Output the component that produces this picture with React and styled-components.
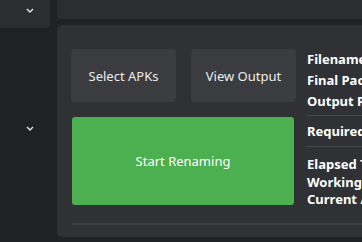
import React from 'react';
import styled, { createGlobalStyle } from 'styled-components';

const GlobalStyle = createGlobalStyle`
  html, body {
    margin: 0;
    padding: 0;
    background-color: #1f2124;
    overflow: hidden;
  }
  * {
    box-sizing: border-box;
  }
`;

const Layout = styled.div`
  display: flex;
  width: 362px;
  height: 242px;
  overflow: hidden;
  font-family: "Noto Sans", "Open Sans", sans-serif;
`;

const Sidebar = styled.div`
  width: 50px;
  flex-shrink: 0;
  display: flex;
  flex-direction: column;
`;

const SidebarHeader = styled.div`
  height: 28px;
  background-color: #2b2e31;
  border-bottom-right-radius: 4px;
  display: flex;
  justify-content: flex-end;
  align-items: center;
  padding: 0 16px 8px 0;
`;

const SidebarItem = styled.div`
  height: 8px;
  margin-top: 96px;
  display: flex;
  justify-content: flex-end;
  align-items: center;
  padding-right: 16px;
`;

const Main = styled.div`
  margin-left: 7px;
  width: 420px;
  flex-shrink: 0;
  display: flex;
  flex-direction: column;
`;

const TopBar = styled.div`
  height: 19px;
  background-color: #2b2e31;
  border-bottom-left-radius: 4px;
`;

const Panel = styled.div`
  margin-top: 6px;
  height: 212px;
  background-color: #2f3134;
  border-radius: 5px;
  padding: 24px 0 0 14px;
  display: flex;
  flex-direction: column;
`;

const Content = styled.div`
  display: flex;
`;

const Controls = styled.div`
  width: 225px;
  display: flex;
  flex-direction: column;
`;

const ButtonRow = styled.div`
  display: flex;
  gap: 15px;
`;

const Button = styled.button`
  width: 105px;
  height: 53px;
  border: none;
  border-radius: 4px;
  background-color: #3a3c3f;
  color: #ececec;
  font-family: inherit;
  font-size: 13px;
  padding: 0;
`;

const StartButton = styled.button`
  margin: 15px 0 0 1px;
  width: 222px;
  height: 88px;
  border: none;
  border-radius: 3px;
  background-color: #4caf50;
  color: #ffffff;
  font-family: inherit;
  font-size: 13px;
  padding: 0;
`;

const Info = styled.div`
  margin-left: 10px;
  flex: 1;
  display: flex;
  flex-direction: column;
  margin-top: -1px;
`;

const InfoRow = styled.div`
  height: ${(p) => p.$h}px;
  display: flex;
  align-items: center;
  padding-left: 1px;
  color: #ffffff;
  font-size: 13px;
  font-weight: 700;
  white-space: nowrap;
`;

const Divider = styled.div`
  height: 1px;
  background-color: #45474a;
  margin: ${(p) => p.$m};
`;

const BottomLine = styled.div`
  height: 2px;
  margin: 15px 0 0 1px;
  background-color: #3d3f42;
`;

const Chevron = () => (
  <svg width="8" height="5" viewBox="0 0 8 5">
    <polyline points="1,1 4,4 7,1" fill="none" stroke="#e6e6e6" strokeWidth="1.4" />
  </svg>
);

const App = () => {
  return (
    <>
      <GlobalStyle />
      <Layout>
        <Sidebar>
          <SidebarHeader>
            <Chevron />
          </SidebarHeader>
          <SidebarItem>
            <Chevron />
          </SidebarItem>
        </Sidebar>
        <Main>
          <TopBar />
          <Panel>
            <Content>
              <Controls>
                <ButtonRow>
                  <Button>Select APKs</Button>
                  <Button>View Output</Button>
                </ButtonRow>
                <StartButton>Start Renaming</StartButton>
              </Controls>
              <Info>
                <InfoRow $h={21}>Filename:</InfoRow>
                <InfoRow $h={21}>Final Package:</InfoRow>
                <InfoRow $h={21}>Output Path:</InfoRow>
                <Divider $m="4px 0 5px 0" />
                <InfoRow $h={20}>Required Tools:</InfoRow>
                <Divider $m="5px 0 8px 0" />
                <InfoRow $h={18}>Elapsed Time:</InfoRow>
                <InfoRow $h={17}>Working On:</InfoRow>
                <InfoRow $h={18}>Current APK:</InfoRow>
              </Info>
            </Content>
            <BottomLine />
          </Panel>
        </Main>
      </Layout>
    </>
  );
};

export default App;
